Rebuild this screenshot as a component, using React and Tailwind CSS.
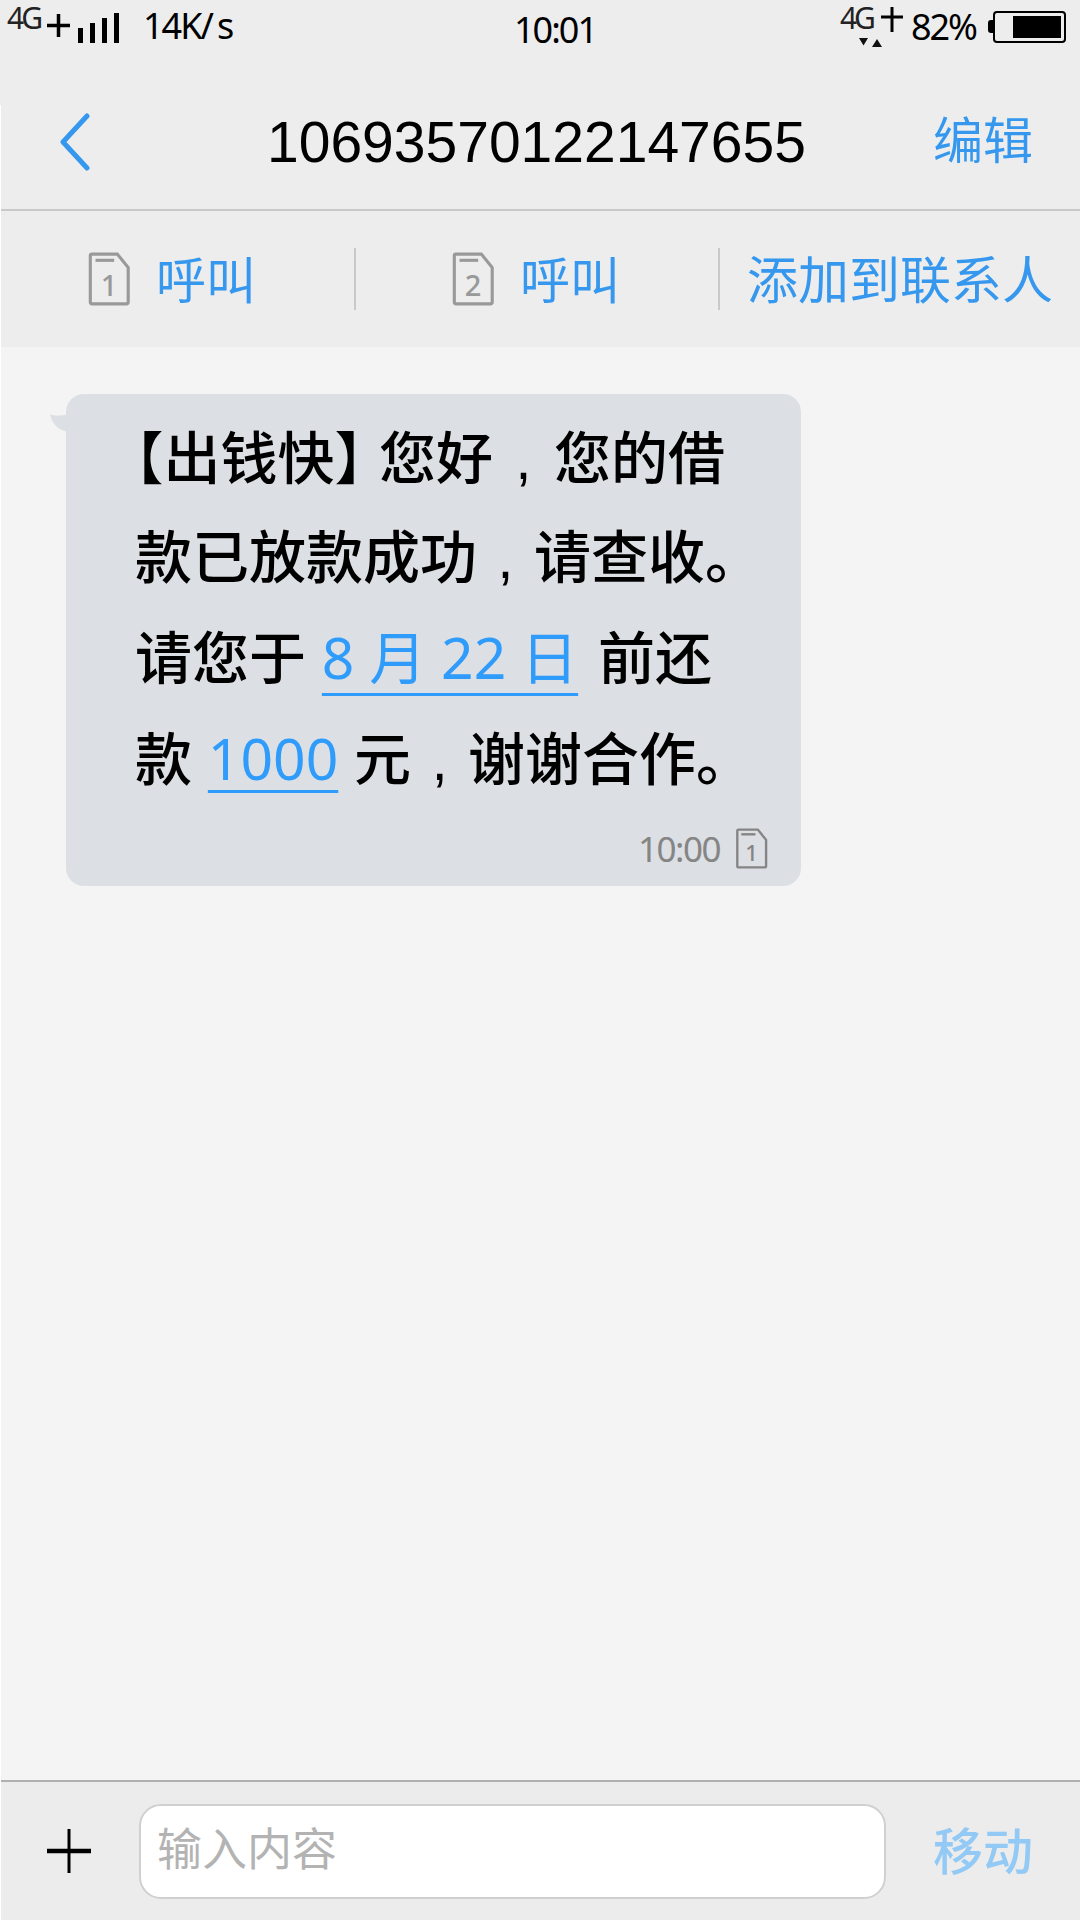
const cjk = { fontFamily: '"Liberation Sans", "Noto Sans CJK SC", sans-serif' }
const soft = { fontFamily: '"Noto Sans", "Noto Sans CJK SC", sans-serif' }

function SimIcon({ n, className }) {
  return (
    <svg viewBox="0 0 40 52" className={className} fill="none">
      <path d="M2 3.500a1.500 1.500 0 0 1 1.500-1.500H28L38.500 15V48.500a1.500 1.500 0 0 1-1.500 1.500H3.500A1.500 1.500 0 0 1 2 48.500Z" stroke="currentColor" strokeWidth="3" />
      <path d="M7 8H25" stroke="currentColor" strokeWidth="3" />
      <text x="20" y="42" textAnchor="middle" fontSize="28" fontWeight="500" fill="currentColor" fontFamily="Noto Sans, sans-serif">{n}</text>
    </svg>
  )
}

function StatusBar() {
  return (
    <div className="h-[105px] bg-[#ededed] flex text-black" style={soft}>
      <div className="w-[514px] shrink-0 flex items-start pl-[7px]">
        <span className="w-[35px] text-[30px] leading-[36px] tracking-[-3px] text-[#222]">4G</span>
        <svg viewBox="0 0 23 23" className="w-[23px] h-[23px] mt-[14px] ml-[5px]"><path d="M0 11.500H23M11.500 0V23" stroke="#000" strokeWidth="3.500" /></svg>
        <div className="flex items-end gap-[7px] h-[30px] mt-[13px] ml-[8px]">
          <div className="w-[5px] h-[15px] bg-black" />
          <div className="w-[5px] h-[20px] bg-black" />
          <div className="w-[5px] h-[25px] bg-black" />
          <div className="w-[5px] h-[30px] bg-black" />
        </div>
        <span className="text-[36px] leading-[36px] mt-[8px] ml-[24px] tracking-[-2px] whitespace-nowrap">14K/<span className="ml-[5px]">s</span></span>
      </div>
      <div className="w-[80px] shrink-0 text-[36px] leading-[36px] mt-[12px] tracking-[-2px] whitespace-nowrap">10:01</div>
      <div className="flex-1 flex items-start justify-end pr-[14px]">
        <div className="relative w-[36px] h-[48px]">
          <span className="text-[30px] leading-[36px] tracking-[-3px] text-[#222]">4G</span>
          <svg viewBox="0 0 23 10" className="absolute left-[19px] top-[38px] w-[23px] h-[10px]"><path d="M0 0H9L4.500 7.500ZM13 9L18 1L23 9Z" fill="#111" /></svg>
        </div>
        <svg viewBox="0 0 22 25" className="w-[22px] h-[25px] mt-[7px] ml-[5px]"><path d="M0 10H22M11 0V25" stroke="#000" strokeWidth="3" /></svg>
        <span className="text-[36px] leading-[36px] mt-[9px] ml-[8px] tracking-[-2px] whitespace-nowrap">82%</span>
        <div className="w-[5px] h-[13px] bg-black rounded-l-[3px] mt-[20px] ml-[12px]" />
        <div className="w-[73px] h-[32px] border-2 border-black rounded-[4px] mt-[11px] flex justify-end p-[3px] bg-[#ededed]">
          <div className="w-[48px] bg-black" />
        </div>
      </div>
    </div>
  )
}

function CallButton({ n, className }) {
  return (
    <div className={`flex items-center ${className}`}>
      <SimIcon n={n} className="w-[42px] h-[54px] text-[#999]" />
      <span className="ml-[26px] mt-[6px] text-[50px] leading-[60px] text-[#3598ee]">呼叫</span>
    </div>
  )
}

function Comma({ className = 'w-[57px]' }) {
  return <span className={`inline-block text-center ${className}`}>,</span>
}

export default function App() {
  return (
    <div className="w-[1080px] h-[1920px] flex flex-col bg-white overflow-hidden" style={cjk}>
      <StatusBar />
      <div className="flex-1 flex flex-col ml-[1px]">
        <header className="h-[106px] pb-[30px] bg-[#ededed] border-b-2 border-[#c9c9c9] flex items-center shrink-0">
          <svg viewBox="0 0 30 58" className="w-[30px] h-[58px] ml-[59px]" fill="none">
            <path d="M27 3L3 29L27 55" stroke="#3598ee" strokeWidth="5" strokeLinecap="round" strokeLinejoin="round" />
          </svg>
          <h1 className="ml-[177px] text-[57px] leading-[66px] font-normal text-black">10693570122147655</h1>
          <span className="ml-auto text-[50px] leading-[60px] text-[#3598ee] mr-[47px]">编辑</span>
        </header>
        <div className="h-[136px] bg-[#ededed] flex items-center shrink-0">
          <CallButton n="1" className="w-[355px] pl-[87px] border-r-2 border-[#c9c9c9] h-[62px]" />
          <CallButton n="2" className="w-[364px] pl-[96px] border-r-2 border-[#c9c9c9] h-[62px]" />
          <span className="ml-[27px] mt-[6px] text-[51px] leading-[60px] text-[#3598ee] whitespace-nowrap">添加到联系人</span>
        </div>
        <main className="flex-1 bg-[#f4f4f4] pt-[47px] pl-[65px]">
          <div className="relative w-[735px] h-[492px] bg-[#dcdfe3] rounded-[18px] pt-[16px] pl-[69px]">
            <svg viewBox="0 0 18 18" className="absolute left-[-16px] top-[20px] w-[18px] h-[18px]"><path d="M0 0C4 2 10 2 18 0V18C8 16 2 10 0 0Z" fill="#dcdfe3" /></svg>
            <div className="text-[57px] leading-[99px] font-medium text-black whitespace-nowrap">
              <p><span className="[font-feature-settings:'halt'] mr-[16px]">【出钱快】</span>您好<Comma className="w-[61px]" />您的借</p>
              <p>款已放款成功<Comma />请查收。</p>
              <p>请您于 <span className="text-[#2f9bfb] font-normal underline decoration-[3px] underline-offset-[14px] mr-[4px]" style={soft}>8 月 22 日</span> 前还</p>
              <p>款 <span className="text-[#2f9bfb] font-normal underline decoration-[3px] underline-offset-[10px]" style={soft}>1000</span> 元<Comma />谢谢合作。</p>
            </div>
            <div className="absolute right-[33px] bottom-[17px] flex items-center text-[#858585]" style={soft}>
              <span className="text-[35px] leading-[40px] tracking-[-1.500px]">10:00</span>
              <SimIcon n="1" className="w-[33px] h-[41px] ml-[15px]" />
            </div>
          </div>
        </main>
        <footer className="h-[140px] shrink-0 bg-[#ececec] border-t-2 border-[#b0b0b0] flex items-center">
          <svg viewBox="0 0 44 44" className="w-[44px] h-[44px] ml-[46px]"><path d="M0 22H44" stroke="#000" strokeWidth="4.500" /><path d="M22 0V44" stroke="#000" strokeWidth="3" /></svg>
          <div className="w-[747px] h-[95px] ml-[48px] bg-white border-2 border-[#d0d0d0] rounded-[22px] flex items-center pl-[16px] text-[45px] text-[#b3b3b3]">输入内容</div>
          <span className="ml-[47px] mt-[3px] text-[50px] leading-[60px] font-medium text-[#93c9f5]">移动</span>
        </footer>
      </div>
    </div>
  )
}
